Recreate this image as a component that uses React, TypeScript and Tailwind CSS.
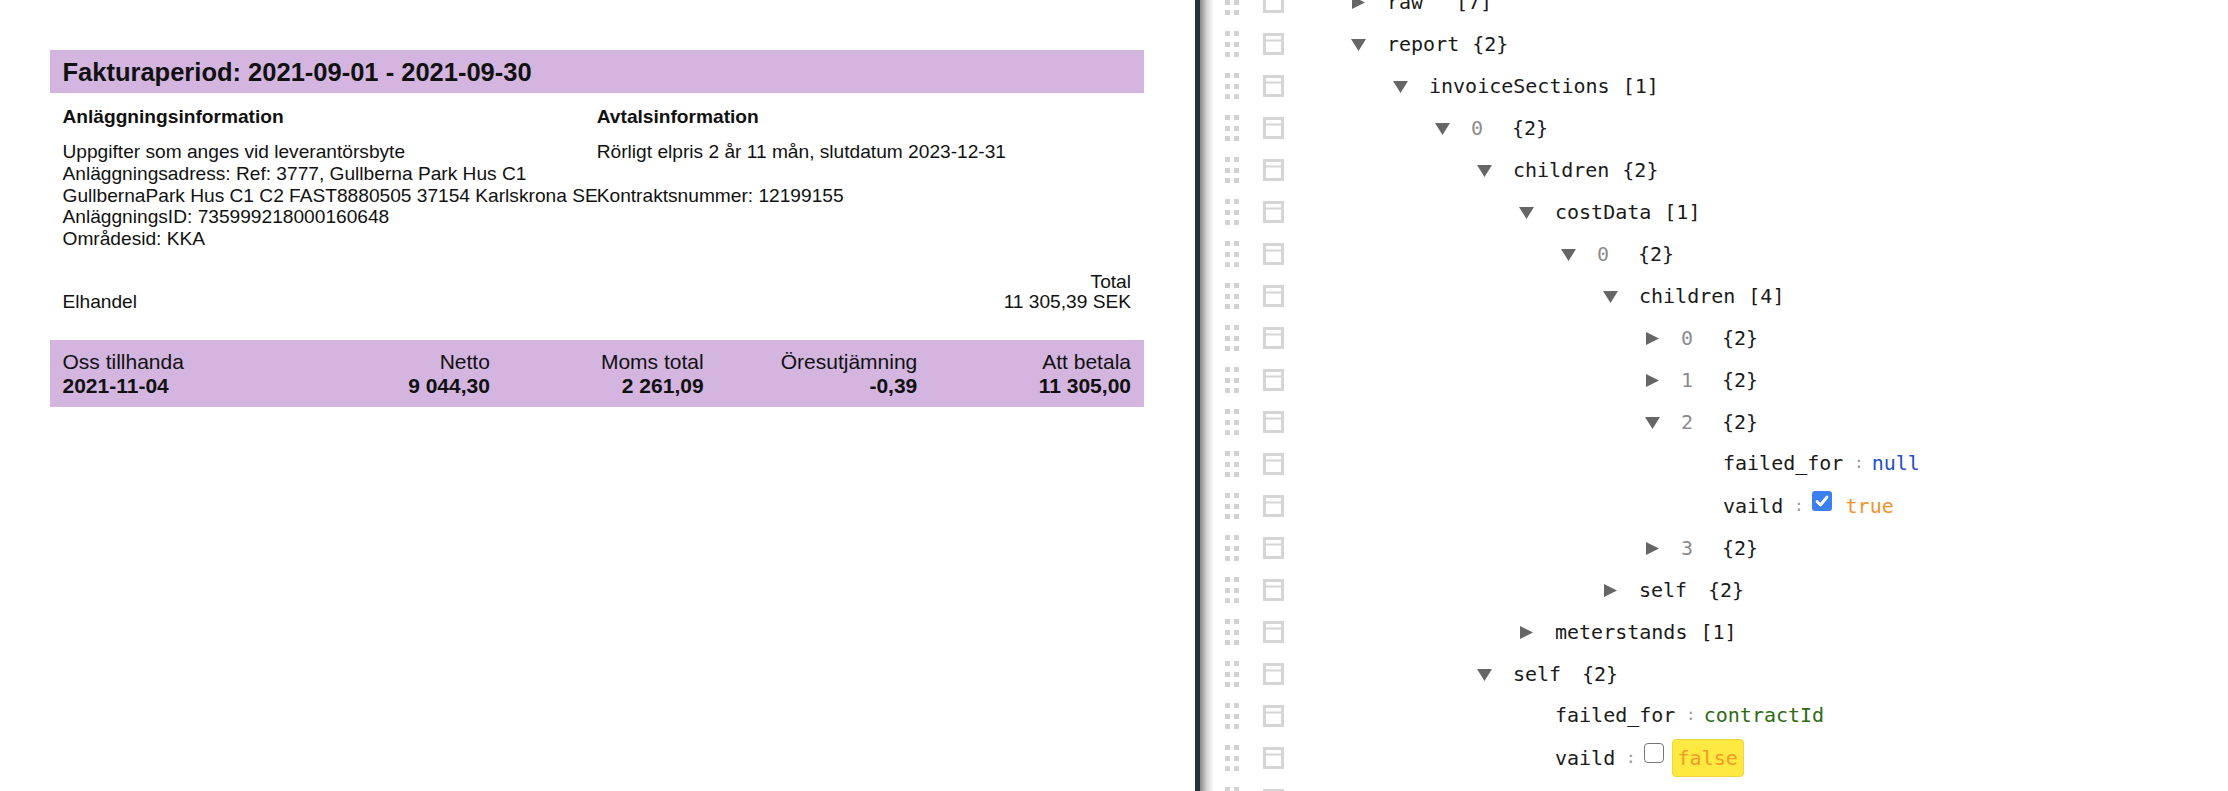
type Row = {
  depth: number;
  arrow?: "down" | "right";
  name?: string;
  index?: string;
  count?: string;
  leaf?: "null" | "string" | "true" | "false";
  value?: string;
};

const rows: Row[] = [
  { depth: 0, arrow: "right", name: "raw", count: "[7]" },
  { depth: 0, arrow: "down", name: "report", count: "{2}" },
  { depth: 1, arrow: "down", name: "invoiceSections", count: "[1]" },
  { depth: 2, arrow: "down", index: "0", count: "{2}" },
  { depth: 3, arrow: "down", name: "children", count: "{2}" },
  { depth: 4, arrow: "down", name: "costData", count: "[1]" },
  { depth: 5, arrow: "down", index: "0", count: "{2}" },
  { depth: 6, arrow: "down", name: "children", count: "[4]" },
  { depth: 7, arrow: "right", index: "0", count: "{2}" },
  { depth: 7, arrow: "right", index: "1", count: "{2}" },
  { depth: 7, arrow: "down", index: "2", count: "{2}" },
  { depth: 8, name: "failed_for", leaf: "null", value: "null" },
  { depth: 8, name: "vaild", leaf: "true", value: "true" },
  { depth: 7, arrow: "right", index: "3", count: "{2}" },
  { depth: 6, arrow: "right", name: "self", count: "{2}" },
  { depth: 4, arrow: "right", name: "meterstands", count: "[1]" },
  { depth: 3, arrow: "down", name: "self", count: "{2}" },
  { depth: 4, name: "failed_for", leaf: "string", value: "contractId" },
  { depth: 4, name: "vaild", leaf: "false", value: "false" },
  // next row is scrolled below the fold, only its handle peeks in
  { depth: 0 },
];

// indentation per tree depth, 42px a level
const indent = [
  "pl-[68px]",
  "pl-[110px]",
  "pl-[152px]",
  "pl-[194px]",
  "pl-[236px]",
  "pl-[278px]",
  "pl-[320px]",
  "pl-[362px]",
  "pl-[404px]",
];

function Grip() {
  return (
    <div className="grid grid-cols-2 gap-x-[4px] gap-y-[5.5px] w-[14px] shrink-0">
      {Array.from({ length: 6 }).map((_, i) => (
        <span key={i} className="block w-[5px] h-[5px] bg-[#d3d3d3]" />
      ))}
    </div>
  );
}

function RowIcon() {
  return (
    <svg width="21" height="22" viewBox="0 0 21 22" className="ml-[24px] shrink-0">
      <rect x="1.5" y="1.5" width="18" height="19" fill="none" stroke="#d5d5d5" strokeWidth="3" />
      <line x1="2" x2="19" y1="7.5" y2="7.5" stroke="#d5d5d5" strokeWidth="2" />
    </svg>
  );
}

function Arrow({ dir }: { dir: "down" | "right" }) {
  if (dir === "down") {
    return (
      <svg width="15" height="12" viewBox="0 0 15 12" className="mt-[2px] -ml-[1px]">
        <path d="M0 0H15L7.5 12Z" fill="#666666" />
      </svg>
    );
  }
  return (
    <svg width="13" height="13" viewBox="0 0 13 13" className="mt-[1px]">
      <path d="M0 0L13 6.5L0 13Z" fill="#666666" />
    </svg>
  );
}

function Checkbox({ checked }: { checked: boolean }) {
  if (checked) {
    return (
      <svg width="20" height="20" viewBox="0 0 20 20" className="inline-block align-[2px]">
        <rect width="20" height="20" rx="3" fill="#3b7ff3" />
        <path d="M5 10.5L8.5 14L15 6" fill="none" stroke="white" strokeWidth="2.8" strokeLinecap="round" strokeLinejoin="round" />
      </svg>
    );
  }
  return (
    <span className="inline-block w-[20px] h-[20px] align-[2px] rounded-[4px] border-[1.5px] border-[#767676] bg-white" />
  );
}

function LeafValue({ row }: { row: Row }) {
  if (row.leaf === "null") return <span className="text-[#2450c8]">{row.value}</span>;
  if (row.leaf === "string") return <span className="text-[#2e6b12]">{row.value}</span>;
  const on = row.leaf === "true";
  return (
    <>
      <Checkbox checked={on} />
      <span
        className={
          on
            ? "inline-block ml-[8px] px-[5px] py-[6.5px] border border-transparent text-[#f0932b]"
            : "inline-block ml-[8px] px-[5px] py-[6.5px] border border-[#eed63c] rounded-[4px] bg-[#fde93f] text-[#f39a2a]"
        }
      >
        {row.value}
      </span>
    </>
  );
}

function TreeRow({ row }: { row: Row }) {
  const empty = !row.name && row.index === undefined;
  return (
    <div className="h-[42px] flex items-center">
      <Grip />
      <RowIcon />
      {!empty && (
        <div className={`flex items-center ${indent[row.depth]}`}>
          <span className="w-[35px] shrink-0 flex items-center">{row.arrow && <Arrow dir={row.arrow} />}</span>
          <span className="whitespace-nowrap">
            {row.leaf ? (
              <>
                <span>{row.name}</span>
                <span className="relative -top-[2px] ml-[10.7px] mr-[8px] text-[16px] text-[#9a9a9a]">:</span>
                <LeafValue row={row} />
              </>
            ) : (
              <>
                {row.index !== undefined ? (
                  <span className="inline-block min-w-[28px] text-[#8c8c8c]">{row.index}</span>
                ) : (
                  <span className="inline-block min-w-[56px]">{row.name}</span>
                )}
                <span className="ml-[13px]">{row.count}</span>
              </>
            )}
          </span>
        </div>
      )}
    </div>
  );
}

function Invoice() {
  return (
    <div className="w-[1195px] shrink-0 pt-[50px] pl-[50px] font-['Liberation_Sans',Arial,sans-serif] text-[#111]">
      <div className="w-[1094px]">
        <div className="h-[43px] bg-[#d3b5e0] pl-[12.5px] pr-[13px] pt-[2px] flex items-center">
          <h1 className="text-[25.5px] leading-[29px] font-bold">Fakturaperiod: 2021-09-01 - 2021-09-30</h1>
        </div>

        <div className="pl-[12.5px] pr-[13px] text-[19.15px] leading-[21.85px]">
          <div className="grid grid-cols-2 mt-[13px]">
            <div>
              <h2 className="font-bold">Anläggningsinformation</h2>
              <div className="mt-[13px] whitespace-nowrap">
                <p>Uppgifter som anges vid leverantörsbyte</p>
                <p>Anläggningsadress: Ref: 3777, Gullberna Park Hus C1</p>
                <p>GullbernaPark Hus C1 C2 FAST8880505 37154 Karlskrona SE</p>
                <p>AnläggningsID: 735999218000160648</p>
                <p>Områdesid: KKA</p>
              </div>
            </div>
            <div>
              <h2 className="font-bold">Avtalsinformation</h2>
              <div className="mt-[13px] whitespace-nowrap">
                <p>Rörligt elpris 2 år 11 mån, slutdatum 2023-12-31</p>
                <p className="mt-[21.85px]">Kontraktsnummer: 12199155</p>
              </div>
            </div>
          </div>

          <div className="flex justify-between items-end mt-[22px] leading-[20px]">
            <span>Elhandel</span>
            <div className="text-right">
              <div>Total</div>
              <div>11 305,39 SEK</div>
            </div>
          </div>
        </div>

        <div className="mt-[28px] bg-[#d3b5e0] pt-[10px] pb-[8.5px] pl-[12.5px] pr-[13px] grid grid-cols-5 text-[21px] leading-[24.15px]">
          <div>
            <div>Oss tillhanda</div>
            <div className="font-bold">2021-11-04</div>
          </div>
          <div className="text-right">
            <div>Netto</div>
            <div className="font-bold">9 044,30</div>
          </div>
          <div className="text-right">
            <div>Moms total</div>
            <div className="font-bold">2 261,09</div>
          </div>
          <div className="text-right">
            <div>Öresutjämning</div>
            <div className="font-bold">-0,39</div>
          </div>
          <div className="text-right">
            <div>Att betala</div>
            <div className="font-bold">11 305,00</div>
          </div>
        </div>
      </div>
    </div>
  );
}

export default function App() {
  return (
    <div className="w-[2228px] h-[791px] flex overflow-hidden bg-white">
      <Invoice />
      <div className="flex-1 flex h-full">
        <div className="w-[5px] shrink-0 bg-[#263238]" />
        <div className="w-[14px] shrink-0 bg-linear-to-r from-[#8a8a8a] via-[#d6d6d6] to-white" />
        <div className="flex-1 pl-[11px] -mt-[19px] font-['DejaVu_Sans_Mono',monospace] text-[20px] leading-[23px] text-[#1a1a1a]">
          {rows.map((row, i) => (
            <TreeRow key={i} row={row} />
          ))}
        </div>
      </div>
    </div>
  );
}
